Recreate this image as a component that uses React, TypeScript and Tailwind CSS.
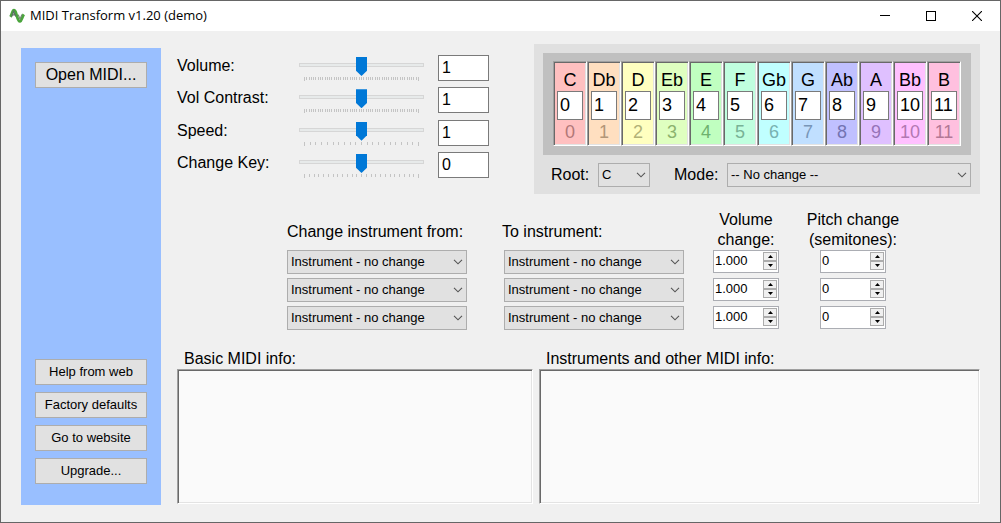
import type { ReactNode } from "react";

const SUNKEN =
  "border border-t-[#a0a0a0] border-l-[#a0a0a0] border-r-white border-b-white shadow-[inset_1px_1px_0_#696969,inset_-1px_-1px_0_#e3e3e3]";

const NOTES = [
  { name: "C", color: "bg-[#ffc0c0]", faded: "text-[#b27878]" },
  { name: "Db", color: "bg-[#ffdfc0]", faded: "text-[#b29678]" },
  { name: "D", color: "bg-[#ffffc0]", faded: "text-[#b2b278]" },
  { name: "Eb", color: "bg-[#dfffc0]", faded: "text-[#8cb26e]" },
  { name: "E", color: "bg-[#c0ffc0]", faded: "text-[#6eb26e]" },
  { name: "F", color: "bg-[#c0ffdf]", faded: "text-[#78b296]" },
  { name: "Gb", color: "bg-[#c0ffff]", faded: "text-[#78b2b2]" },
  { name: "G", color: "bg-[#c0dfff]", faded: "text-[#7896b8]" },
  { name: "Ab", color: "bg-[#c0c0ff]", faded: "text-[#7373b2]" },
  { name: "A", color: "bg-[#dfc0ff]", faded: "text-[#9673b8]" },
  { name: "Bb", color: "bg-[#ffc0ff]", faded: "text-[#b278b2]" },
  { name: "B", color: "bg-[#ffc0df]", faded: "text-[#b27896]" },
];

const SLIDERS = [
  { id: "volume", label: "Volume:", value: "1", steps: 50 },
  { id: "contrast", label: "Vol Contrast:", value: "1", steps: 50 },
  { id: "speed", label: "Speed:", value: "1", steps: 20 },
  { id: "key", label: "Change Key:", value: "0", steps: 24 },
];

const ROWS = [1, 2, 3];

function Logo() {
  return (
    <svg viewBox="0 0 16 16" className="size-4 shrink-0" aria-hidden="true">
      <path
        d="M1.4 8.9 C2.6 7.2 3.2 3.2 4.6 2.2 C6.2 1.4 7 5 8 8.4 C8.8 11.4 9.6 13.6 11 13.4 C12.6 13 13.2 8.6 14.8 6.4"
        fill="none"
        stroke="#4aa53c"
        strokeWidth="2.8"
        strokeLinejoin="round"
      />
      <path
        d="M2.6 8.6 L4.6 3.2 L6.8 8.6 M3.4 6.8 H6"
        fill="none"
        stroke="#5d6f66"
        strokeWidth="1.2"
      />
      <path d="M9.2 6.6 L11 11.2 L13 6.4" fill="none" stroke="#6f8a70" strokeWidth="1.2" />
    </svg>
  );
}

function PushButton({ large = false, children }: { large?: boolean; children: ReactNode }) {
  return (
    <button
      type="button"
      className={`h-[26px] w-full border border-[#adadad] bg-[#e1e1e1] ${large ? "text-base leading-6" : "text-[13px] leading-6"}`}
    >
      {children}
    </button>
  );
}

function Ticks({ steps }: { steps: number }) {
  const marks = Array.from({ length: steps + 1 }, (_, i) => i);
  return (
    <svg viewBox="0 0 115 4" className="mt-0.5 ml-[5px] h-1 w-[115px]" aria-hidden="true" shapeRendering="crispEdges">
      {marks.map((i) => (
        <rect
          key={i}
          x={Math.round((i * 114) / steps)}
          y="0"
          width="1"
          height={i === 0 || i === steps ? 4 : 3}
          fill="#c4c4c4"
        />
      ))}
    </svg>
  );
}

function Slider({ id, label, value, steps }: { id: string; label: string; value: string; steps: number }) {
  return (
    <>
      <label htmlFor={id} className="pt-px leading-5">
        {label}
      </label>
      <div className="w-[125px]">
        <input
          id={id}
          type="range"
          min={0}
          max={steps}
          defaultValue={steps / 2}
          className="block h-5 w-full appearance-none bg-transparent [&::-webkit-slider-runnable-track]:h-1 [&::-webkit-slider-runnable-track]:border [&::-webkit-slider-runnable-track]:border-[#d6d6d6] [&::-webkit-slider-runnable-track]:bg-[#e7eaea] [&::-webkit-slider-thumb]:-mt-[7px] [&::-webkit-slider-thumb]:h-[19px] [&::-webkit-slider-thumb]:w-[11px] [&::-webkit-slider-thumb]:appearance-none [&::-webkit-slider-thumb]:bg-[#0078d7] [&::-webkit-slider-thumb]:[clip-path:polygon(0_0,100%_0,100%_72%,50%_100%,0_72%)]"
        />
        <Ticks steps={steps} />
      </div>
      <input
        type="text"
        aria-label={label}
        defaultValue={value}
        className="h-[26px] w-[51px] border border-[#7a7a7a] bg-white pl-[3px] text-base"
      />
    </>
  );
}

function Dropdown({ id, label, value, className }: { id?: string; label?: string; value: string; className: string }) {
  return (
    <div className={`grid ${className}`}>
      <select
        id={id}
        aria-label={label}
        className="col-start-1 row-start-1 h-6 w-full appearance-none border border-[#adadad] bg-[#e1e1e1] pl-[3px] text-[13px] leading-5"
      >
        <option>{value}</option>
      </select>
      <svg
        viewBox="0 0 10 6"
        className="pointer-events-none col-start-1 row-start-1 mr-1 h-1.5 w-2.5 self-center justify-self-end"
        aria-hidden="true"
      >
        <path d="M1 0.8 L5 4.8 L9 0.8" fill="none" stroke="#555" strokeWidth="1.1" />
      </svg>
    </div>
  );
}

function StepButton({ name, up = false }: { name: string; up?: boolean }) {
  return (
    <button
      type="button"
      aria-label={name}
      className="flex h-[9px] w-3.5 items-center justify-center border border-[#acacac] bg-[#f0f0f0]"
    >
      <svg viewBox="0 0 5 3" className="h-[3px] w-[5px]" aria-hidden="true">
        <path d={up ? "M0 3 L2.5 0 L5 3 Z" : "M0 0 L2.5 3 L5 0 Z"} fill="#000" />
      </svg>
    </button>
  );
}

function Spinner({ label, value }: { label: string; value: string }) {
  return (
    <div className="flex h-[23px] w-[66px] border border-[#abadb3] bg-white">
      <input
        type="text"
        aria-label={label}
        defaultValue={value}
        className="h-[19px] min-w-0 flex-1 pl-px text-[13px] leading-[19px]"
      />
      <div className="mr-px flex flex-col pt-px">
        <StepButton name={`${label} up`} up />
        <StepButton name={`${label} down`} />
      </div>
    </div>
  );
}

function InfoBox({ id, label, className }: { id: string; label: string; className: string }) {
  return (
    <div className={`flex flex-col ${className}`}>
      <label htmlFor={id} className="pl-[7px] leading-5">
        {label}
      </label>
      <textarea id={id} readOnly className={`block w-full flex-1 resize-none bg-[#fafafa] p-1 ${SUNKEN}`} />
    </div>
  );
}

function TitleBar() {
  return (
    <header className="flex h-[30px] items-center bg-white pl-2">
      <Logo />
      <h1 className="flex-1 pl-[5px] font-['Open_Sans',sans-serif] text-[13px]">MIDI Transform v1.20 (demo)</h1>
      <button type="button" aria-label="Minimize" className="flex h-full w-[46px] items-center justify-center">
        <svg viewBox="0 0 10 10" className="size-2.5" shapeRendering="crispEdges">
          <rect y="4" width="10" height="1" fill="#000" />
        </svg>
      </button>
      <button type="button" aria-label="Maximize" className="flex h-full w-[46px] items-center justify-center">
        <svg viewBox="0 0 10 10" className="size-2.5">
          <rect x="0.5" y="0.5" width="9" height="9" fill="none" stroke="#000" />
        </svg>
      </button>
      <button type="button" aria-label="Close" className="flex h-full w-[46px] items-center justify-center">
        <svg viewBox="0 0 10 10" className="size-2.5">
          <path d="M0 0 L10 10 M10 0 L0 10" stroke="#000" strokeWidth="1.1" />
        </svg>
      </button>
    </header>
  );
}

function Sidebar() {
  return (
    <nav className="flex w-[140px] shrink-0 flex-col justify-between bg-[#99bfff] px-3.5 pt-3.5 pb-[21px]">
      <PushButton large>Open MIDI...</PushButton>
      <div className="flex flex-col gap-[7px]">
        <PushButton>Help from web</PushButton>
        <PushButton>Factory defaults</PushButton>
        <PushButton>Go to website</PushButton>
        <PushButton>Upgrade...</PushButton>
      </div>
    </nav>
  );
}

function ScalePanel() {
  return (
    <section className="w-[446px] bg-[#e0e0e0] px-[9px] pt-[9px] pb-[7px]">
      <div className="flex justify-center bg-[#c0c0c0] pt-2 pb-[9px]">
        {NOTES.map((note, i) => (
          <div key={note.name} className={`flex w-[34px] flex-col items-center pt-2 pb-px text-lg ${note.color} ${SUNKEN}`}>
            <label htmlFor={`note-${i}`} className="leading-[21px]">
              {note.name}
            </label>
            <input
              id={`note-${i}`}
              type="text"
              defaultValue={i}
              className="h-[29px] w-[26px] border border-[#7a7a7a] bg-white pl-0.5"
            />
            <span className={`leading-6 ${note.faded}`}>{i}</span>
          </div>
        ))}
      </div>
      <div className="flex items-center pt-2 pl-2">
        <label htmlFor="root" className="w-[47px]">
          Root:
        </label>
        <Dropdown id="root" value="C" className="w-[52px]" />
        <label htmlFor="mode" className="ml-6 w-[53px]">
          Mode:
        </label>
        <Dropdown id="mode" value="-- No change --" className="flex-1" />
      </div>
    </section>
  );
}

function InstrumentPanel() {
  return (
    <section className="flex pt-4 pl-[110px]">
      <div className="w-[180px]">
        <h2 className="flex h-10 items-center pt-1">Change instrument from:</h2>
        <div className="flex flex-col gap-1">
          {ROWS.map((n) => (
            <Dropdown key={n} label={`Change instrument ${n}`} value="Instrument - no change" className="w-full" />
          ))}
        </div>
      </div>
      <div className="ml-[35px] w-[182px]">
        <h2 className="flex h-10 items-center pt-1">To instrument:</h2>
        <div className="flex flex-col gap-1 pl-0.5">
          {ROWS.map((n) => (
            <Dropdown key={n} label={`To instrument ${n}`} value="Instrument - no change" className="w-full" />
          ))}
        </div>
      </div>
      <div className="ml-[29px] flex w-[66px] flex-col items-center">
        <h2 className="h-10 text-center leading-5 whitespace-nowrap">
          Volume
          <br />
          change:
        </h2>
        <div className="flex flex-col gap-[5px]">
          {ROWS.map((n) => (
            <Spinner key={n} label={`Volume change ${n}`} value="1.000" />
          ))}
        </div>
      </div>
      <div className="ml-[27px] flex w-[94px] flex-col items-center">
        <h2 className="h-10 text-center leading-5 whitespace-nowrap">
          Pitch change
          <br />
          (semitones):
        </h2>
        <div className="flex flex-col gap-[5px]">
          {ROWS.map((n) => (
            <Spinner key={n} label={`Pitch change ${n}`} value="0" />
          ))}
        </div>
      </div>
    </section>
  );
}

export default function App() {
  return (
    <div className="flex min-h-screen flex-col border border-[#666] bg-[#f0f0f0] font-['Liberation_Sans',Arial,sans-serif] text-base text-black">
      <TitleBar />
      <div className="flex flex-1 gap-4 pr-5 pl-5">
        <div className="flex pt-[17px] pb-[17px]">
          <Sidebar />
        </div>
        <main className="flex min-w-0 flex-1 flex-col pt-[13px] pb-[18px]">
          <div className="flex items-start justify-between">
            <section className="grid h-[134px] grid-cols-[122px_139px_51px] content-between pt-[11px]">
              {SLIDERS.map((s) => (
                <Slider key={s.id} {...s} />
              ))}
            </section>
            <ScalePanel />
          </div>
          <InstrumentPanel />
          <div className="flex flex-1 gap-1.5 pt-[19px]">
            <InfoBox id="basic" label="Basic MIDI info:" className="w-[356px]" />
            <InfoBox id="other" label="Instruments and other MIDI info:" className="flex-1" />
          </div>
        </main>
      </div>
    </div>
  );
}
